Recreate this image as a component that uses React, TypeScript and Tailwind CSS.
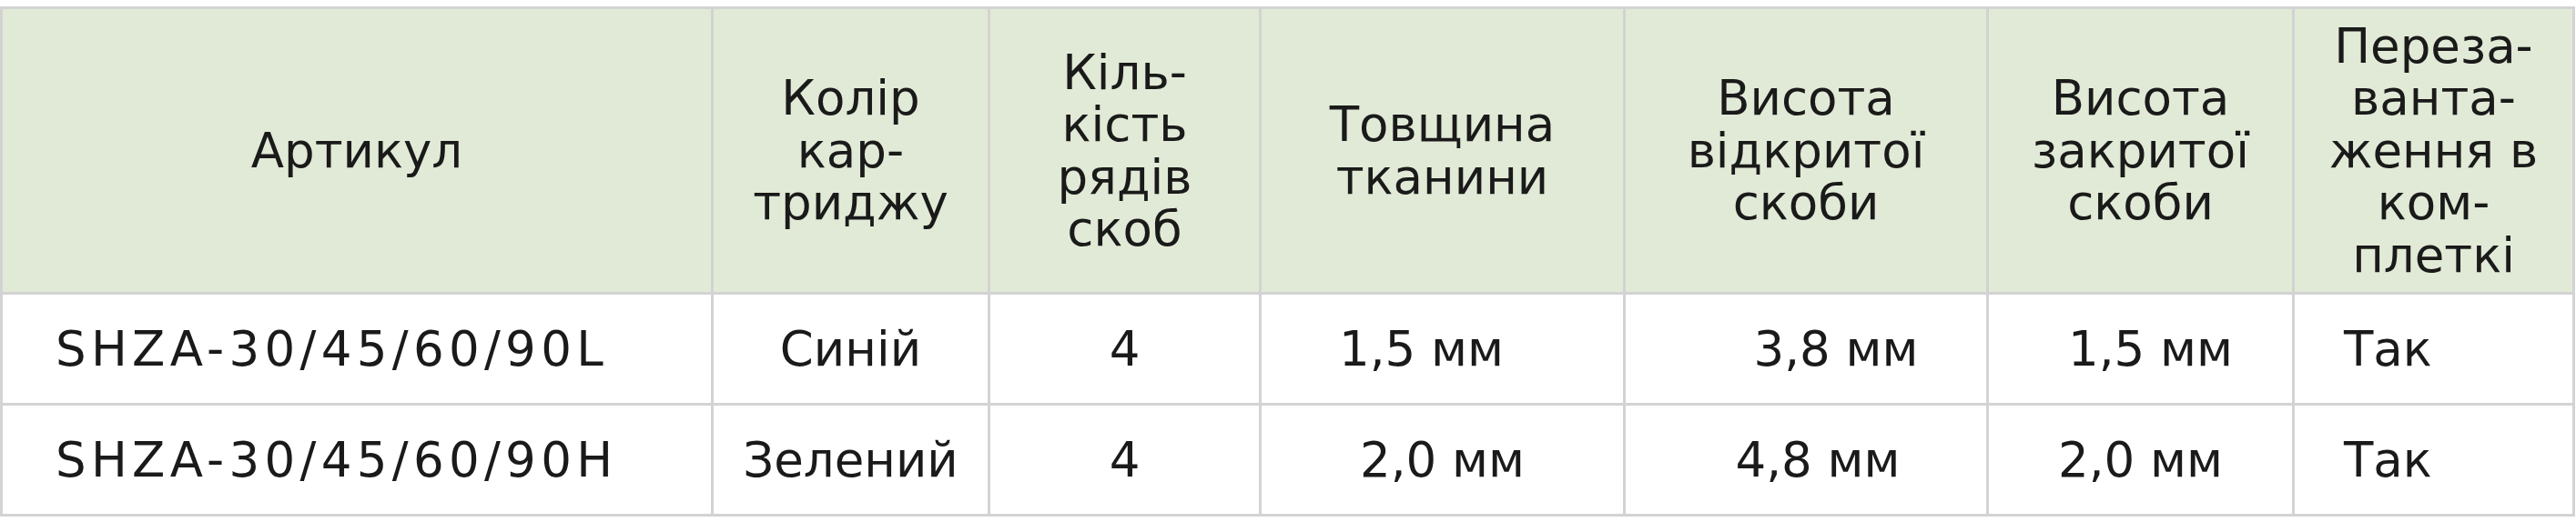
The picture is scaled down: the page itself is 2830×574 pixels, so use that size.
import React from "react";

type Row = {
  sku: string;
  color: string;
  rows: string;
  thickness: string;
  open: string;
  closed: string;
  reload: string;
  pads: [string, string, string];
};

const data: Row[] = [
  {
    sku: "SHZA-30/45/60/90L",
    color: "Синій",
    rows: "4",
    thickness: "1,5 мм",
    open: "3,8 мм",
    closed: "1,5 мм",
    reload: "Так",
    pads: ["pr-[46px]", "pl-[66px]", "pl-[22px]"],
  },
  {
    sku: "SHZA-30/45/60/90H",
    color: "Зелений",
    rows: "4",
    thickness: "2,0 мм",
    open: "4,8 мм",
    closed: "2,0 мм",
    reload: "Так",
    pads: ["", "pl-[26px]", ""],
  },
];

const headers: string[][] = [
  ["Артикул"],
  ["Колір", "кар-", "триджу"],
  ["Кіль-", "кість", "рядів", "скоб"],
  ["Товщина", "тканини"],
  ["Висота", "відкритої", "скоби"],
  ["Висота", "закритої", "скоби"],
  ["Переза-", "ванта-", "ження в", "ком-", "плеткі"],
];

const widths = [781, 304, 298, 400, 399, 336, 308];

const cell = "border-[3px] border-[#d3d3d3] p-0 align-middle";

export default function App() {
  return (
    <div className="min-h-[574px] bg-white pt-[7px] text-[#1a1a1a] [font-family:'DejaVu_Sans',sans-serif]">
      <table className="w-[2826px] table-fixed border-collapse text-[53px] leading-[57.5px]">
        <colgroup>
          {widths.map((w, i) => (
            <col key={i} style={{ width: w }} />
          ))}
        </colgroup>
        <thead>
          <tr className="h-[314px] bg-[#e1ead6]">
            {headers.map((lines, i) => (
              <th key={i} className={`${cell} text-center font-normal`}>
                {lines.map((l, j) => (
                  <div key={j}>{l}</div>
                ))}
              </th>
            ))}
          </tr>
        </thead>
        <tbody>
          {data.map((r) => (
            <tr key={r.sku} className="h-[122px]">
              <td className={`${cell} pl-[58px] tracking-[0.1em]`}>{r.sku}</td>
              <td className={`${cell} text-center`}>{r.color}</td>
              <td className={`${cell} text-center`}>{r.rows}</td>
              <td className={`${cell} text-center ${r.pads[0]}`}>{r.thickness}</td>
              <td className={`${cell} text-center ${r.pads[1]}`}>{r.open}</td>
              <td className={`${cell} text-center ${r.pads[2]}`}>{r.closed}</td>
              <td className={`${cell} pl-[54px]`}>{r.reload}</td>
            </tr>
          ))}
        </tbody>
      </table>
    </div>
  );
}
